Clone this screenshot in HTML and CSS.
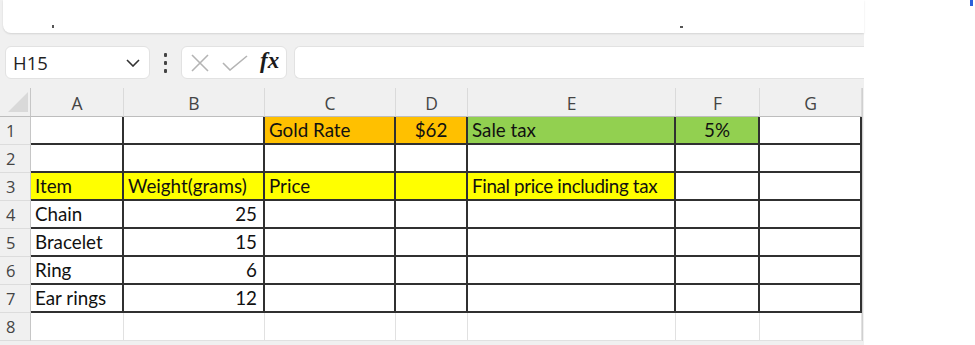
FILE: index.html
```html
<!DOCTYPE html>
<html>
<head>
<meta charset="utf-8">
<link rel="stylesheet" href="styles.css">
</head>
<body>
<div class="page">
  <div class="app">
    <div class="ribbon"><span class="speck s1"></span><span class="speck s2"></span></div>
    <div class="fbar">
      <div class="namebox">
        <span class="ref">H15</span>
        <svg class="chev" width="14" height="8" viewBox="0 0 14 8"><path d="M1 1 L7 7 L13 1" fill="none" stroke="#333" stroke-width="1.6"/></svg>
      </div>
      <div class="dots"><i></i><i></i><i></i></div>
      <div class="fxbox">
        <svg width="20" height="18" viewBox="0 0 20 18"><path d="M2 1 L18 17 M18 1 L2 17" stroke="#b4b4b4" stroke-width="1.6" fill="none"/></svg>
        <svg width="26" height="16" viewBox="0 0 26 16"><path d="M1 8 L8 15 L25 1" stroke="#b4b4b4" stroke-width="1.6" fill="none"/></svg>
        <span class="fx">fx</span>
      </div>
      <div class="finput"></div>
    </div>
    <div class="sheet">
      <div class="row hdr">
        <div class="rh corner"><svg width="20" height="20" viewBox="0 0 20 20"><path d="M20 0 L20 20 L0 20 Z" fill="#d9d9d9"/></svg></div>
        <div class="ch ca">A</div><div class="ch cb">B</div><div class="ch cc">C</div><div class="ch cd">D</div><div class="ch ce">E</div><div class="ch cf">F</div><div class="ch cg">G</div>
        <div class="edge"></div>
      </div>
      <div class="row">
        <div class="rh">1</div>
        <div class="c ca"></div><div class="c cb"></div><div class="c cc orange">Gold Rate</div><div class="c cd orange center">$62</div><div class="c ce green">Sale tax</div><div class="c cf green center">5%</div><div class="c cg"></div>
        <div class="edge"></div>
      </div>
      <div class="row">
        <div class="rh">2</div>
        <div class="c ca"></div><div class="c cb"></div><div class="c cc"></div><div class="c cd"></div><div class="c ce"></div><div class="c cf"></div><div class="c cg"></div>
        <div class="edge"></div>
      </div>
      <div class="row">
        <div class="rh">3</div>
        <div class="c ca yellow">Item</div><div class="c cb yellow">Weight(grams)</div><div class="c cc yellow">Price</div><div class="c cd yellow"></div><div class="c ce yellow tight">Final price including tax</div><div class="c cf"></div><div class="c cg"></div>
        <div class="edge"></div>
      </div>
      <div class="row">
        <div class="rh">4</div>
        <div class="c ca">Chain</div><div class="c cb num">25</div><div class="c cc"></div><div class="c cd"></div><div class="c ce"></div><div class="c cf"></div><div class="c cg"></div>
        <div class="edge"></div>
      </div>
      <div class="row">
        <div class="rh">5</div>
        <div class="c ca">Bracelet</div><div class="c cb num">15</div><div class="c cc"></div><div class="c cd"></div><div class="c ce"></div><div class="c cf"></div><div class="c cg"></div>
        <div class="edge"></div>
      </div>
      <div class="row">
        <div class="rh">6</div>
        <div class="c ca">Ring</div><div class="c cb num">6</div><div class="c cc"></div><div class="c cd"></div><div class="c ce"></div><div class="c cf"></div><div class="c cg"></div>
        <div class="edge"></div>
      </div>
      <div class="row">
        <div class="rh">7</div>
        <div class="c ca">Ear rings</div><div class="c cb num">12</div><div class="c cc"></div><div class="c cd"></div><div class="c ce"></div><div class="c cf"></div><div class="c cg"></div>
        <div class="edge"></div>
      </div>
      <div class="row plain">
        <div class="rh">8</div>
        <div class="c ca"></div><div class="c cb"></div><div class="c cc"></div><div class="c cd"></div><div class="c ce"></div><div class="c cf"></div><div class="c cg"></div>
        <div class="edge"></div>
      </div>
    </div>
  </div>
  <span class="bluemark"></span>
</div>
</body>
</html>
```

FILE: styles.css
```css
html, body {
  margin: 0;
  padding: 0;
  background: #ffffff;
}
.page {
  position: relative;
  width: 975px;
  height: 345px;
  overflow: hidden;
}
.app {
  width: 864px;
  height: 345px;
  background: #f0f0f0;
  display: flex;
  flex-direction: column;
}
.ribbon {
  position: relative;
  height: 33px;
  margin-left: 3px;
  background: #ffffff;
  border-bottom-left-radius: 8px;
  box-shadow: 0 1px 2px rgba(0,0,0,0.12);
}
.speck {
  position: absolute;
  top: 25px;
  width: 2px;
  height: 3px;
  background: #555;
}
.s1 { left: 49px; }
.s2 { left: 677px; width: 3px; height: 2px; top: 26px; }
.fbar {
  display: flex;
  align-items: stretch;
  height: 33px;
  margin-top: 13px;
  padding-left: 5px;
}
.namebox {
  width: 145px;
  box-sizing: border-box;
  background: #fff;
  border: 1px solid #e2e2e2;
  border-radius: 6px;
  display: flex;
  align-items: center;
  justify-content: space-between;
  padding: 0 9px 0 7px;
}
.ref {
  font-family: "Open Sans", "Noto Sans", sans-serif;
  font-size: 18.5px;
  color: #1f1f1f;
}
.chev { margin-top: 1px; }
.dots {
  width: 31px;
  display: flex;
  flex-direction: column;
  align-items: center;
  justify-content: center;
  gap: 4px;
}
.dots i {
  display: block;
  width: 3px;
  height: 4px;
  border-radius: 1px;
  background: #444;
}
.fxbox {
  width: 106px;
  box-sizing: border-box;
  background: #fff;
  border: 1px solid #e2e2e2;
  border-radius: 6px;
  display: flex;
  align-items: center;
  padding-left: 8px;
  gap: 12px;
}
.fx {
  font-family: "Liberation Serif", "DejaVu Serif", serif;
  font-style: italic;
  font-weight: bold;
  font-size: 23px;
  color: #1a1a1a;
  margin-top: -3px;
}
.finput {
  flex: 1;
  margin-left: 7px;
  background: #fff;
  border: 1px solid #e2e2e2;
  border-right: none;
  border-radius: 6px 0 0 6px;
}
.sheet {
  margin-top: 9px;
  display: flex;
  flex-direction: column;
}
.row {
  display: flex;
  height: 28px;
}
.row.hdr {
  height: 29px;
}
.rh {
  width: 31px;
  box-sizing: border-box;
  border-right: 1px solid #c6c6c6;
  border-bottom: 1px solid #dcdcdc;
  background: #f0f0f0;
  font-family: "Open Sans", "Noto Sans", sans-serif;
  font-size: 16.5px;
  color: #444;
  padding-left: 6px;
  display: flex;
  align-items: center;
}
.corner {
  padding-left: 8px;
  align-items: center;
  border-bottom: 1px solid #bdbdbd;
}
.ch {
  box-sizing: border-box;
  border-right: 1px solid #dadada;
  border-bottom: 1px solid #bdbdbd;
  background: #f0f0f0;
  font-family: "Open Sans", "Noto Sans", sans-serif;
  font-size: 17.5px;
  color: #444;
  display: flex;
  align-items: center;
  justify-content: center;
  padding-top: 2px;
}
.ca { width: 93px; }
.cb { width: 141px; }
.cc { width: 131px; }
.cd { width: 72px; }
.ce { width: 208px; }
.cf { width: 84px; }
.cg { width: 102px; }
.edge {
  width: 2px;
  background: #f0f0f0;
  border-left: 1px solid #d0d0d0;
  box-sizing: border-box;
}
.c {
  box-sizing: border-box;
  background: #fff;
  border-right: 2px solid #303030;
  border-bottom: 2px solid #303030;
  font-family: "Lato", "Liberation Sans", sans-serif;
  font-size: 18.8px;
  color: #111;
  display: flex;
  align-items: flex-end;
  padding: 0 4px 2px 4px;
  white-space: nowrap;
  overflow: hidden;
}
.tight { letter-spacing: -0.35px; }
.plain .c {
  border-right: 1px solid #e1e1e1;
  border-bottom: 1px solid #e1e1e1;
}
.num { justify-content: flex-end; padding-right: 6px; }
.center { justify-content: center; }
.orange { background: #ffc000; }
.green { background: #92d050; }
.yellow { background: #ffff00; }
.bluemark {
  position: absolute;
  left: 970px;
  top: 0;
  width: 3px;
  height: 6px;
  background: #2b5fd9;
}
```
